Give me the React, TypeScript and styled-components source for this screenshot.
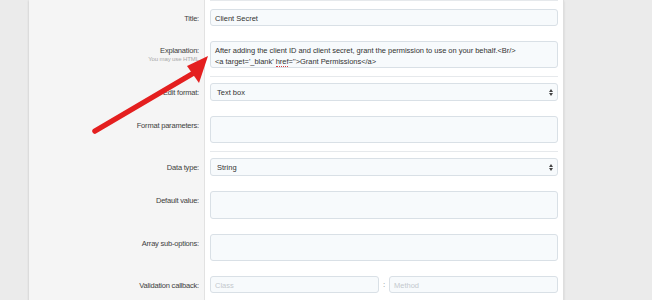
import * as React from "react";
import styled, { createGlobalStyle } from "styled-components";

const GlobalStyle = createGlobalStyle`
  html, body {
    margin: 0;
    padding: 0;
    height: 300px;
    overflow: hidden;
    background: #ebebeb;
    font-family: "Liberation Sans", Arial, sans-serif;
  }
`;

/* =========================
 * Styled components
 * ========================= */

const Stage = styled.div`
  position: relative;
  width: 652px;
  height: 300px;
  overflow: hidden;
`;

const Panel = styled.div`
  margin-left: 29px;
  width: 535px;
  background: #ffffff;
  border-right: 1px solid #dedede;
  border-bottom: 1px solid #d6d6d6;
  box-shadow: 0 1px 2px rgba(0, 0, 0, 0.12), -1px 0 2px rgba(0, 0, 0, 0.04);
  box-sizing: border-box;
`;

const Row = styled.div`
  display: grid;
  grid-template-columns: 176px 1fr;
`;

const LabelCell = styled.div<{ $pt: number }>`
  background: #f5f5f5;
  border-right: 1px solid #e2e2e2;
  padding: ${({ $pt }) => $pt}px 5px 0 0;
  text-align: right;
  display: flex;
  flex-direction: column;
  align-items: flex-end;
`;

const LabelText = styled.div`
  font-size: 7.5px;
  line-height: 11px;
  letter-spacing: -0.2px;
  color: #404040;
`;

const LabelHint = styled.div`
  font-size: 6px;
  line-height: 7px;
  letter-spacing: -0.1px;
  color: #a8a8a8;
`;

const FieldCell = styled.div<{ $pt: number }>`
  padding: ${({ $pt }) => $pt}px 5px 8px 5px;
`;

const DividerCell = styled.div`
  padding: 0 5px;
`;

const DividerLine = styled.div`
  height: 1px;
  background: #e6e9ec;
`;

const DividerRow = styled(Row)<{ $overlap?: boolean }>`
  margin-bottom: ${({ $overlap }) => ($overlap ? "-1px" : "0")};
`;

const TextInput = styled.div<{ $h: number; $placeholder?: boolean }>`
  height: ${({ $h }) => $h}px;
  box-sizing: border-box;
  border: 1px solid #d9e0e6;
  border-radius: 3px;
  background: #f7fafc;
  padding: 1px 4px 0;
  display: flex;
  align-items: center;
  font-size: 7.5px;
  color: ${({ $placeholder }) => ($placeholder ? "#c4c9ce" : "#333")};
  white-space: nowrap;
  overflow: hidden;
`;

const TextArea = styled.div<{ $h: number }>`
  height: ${({ $h }) => $h}px;
  box-sizing: border-box;
  border: 1px solid #d9e0e6;
  border-radius: 3px;
  background: #f7fafc;
  padding: 3px 4px 0;
  font-size: 7.5px;
  line-height: 11px;
  letter-spacing: -0.03px;
  color: #333;
  white-space: nowrap;
  overflow: hidden;
`;

const Spell = styled.span`
  border-bottom: 1px dotted #d84040;
  line-height: 8px;
  display: inline-block;
`;

const SelectBox = styled(TextInput)`
  justify-content: space-between;
  padding: 1px 4px 0 6px;
`;

const SplitRow = styled.div`
  display: grid;
  grid-template-columns: 1fr 10px 1fr;
  align-items: center;
`;

const SplitSep = styled.span`
  font-size: 8px;
  color: #888;
  text-align: center;
  line-height: 1;
`;

const ArrowOverlay = styled.svg`
  position: absolute;
  left: 0;
  top: 0;
  pointer-events: none;
`;

/* =========================
 * Componentes
 * ========================= */

const SelectArrows: React.FC = () => (
  <svg width="4" height="7" viewBox="0 0 4 7">
    <path d="M0 3 L2 0 L4 3 Z" fill="#444" />
    <path d="M0 4 L2 7 L4 4 Z" fill="#444" />
  </svg>
);

type FieldRowProps = {
  label: string;
  hint?: string;
  labelTop: number;
  top?: number;
  children: React.ReactNode;
};

const FieldRow: React.FC<FieldRowProps> = ({
  label,
  hint,
  labelTop,
  top = 7,
  children,
}) => (
  <Row>
    <LabelCell $pt={labelTop}>
      <LabelText>{label}</LabelText>
      {hint && <LabelHint>{hint}</LabelHint>}
    </LabelCell>
    <FieldCell $pt={top}>{children}</FieldCell>
  </Row>
);

const Divider: React.FC<{ overlap?: boolean }> = ({ overlap }) => (
  <DividerRow $overlap={overlap}>
    <LabelCell $pt={0} />
    <DividerCell>
      <DividerLine />
    </DividerCell>
  </DividerRow>
);

export default function App() {
  return (
    <Stage>
      <GlobalStyle />
      <Panel>
        <Divider />
        <FieldRow label="Title:" labelTop={12} top={8}>
          <TextInput $h={17}>Client Secret</TextInput>
        </FieldRow>
        <FieldRow label="Explanation:" hint="You may use HTML" labelTop={11}>
          <TextArea $h={27}>
            After adding the client ID and client secret, grant the permission
            to use on your behalf.&lt;Br/&gt;
            <br />
            &lt;a target='_blank' <Spell>href</Spell>=''&gt;Grant
            Permissions&lt;/a&gt;
          </TextArea>
        </FieldRow>
        <Divider overlap />
        <FieldRow label="Edit format:" labelTop={11}>
          <SelectBox $h={18}>
            <span>Text box</span>
            <SelectArrows />
          </SelectBox>
        </FieldRow>
        <FieldRow label="Format parameters:" labelTop={11}>
          <TextArea $h={27} />
        </FieldRow>
        <Divider overlap />
        <FieldRow label="Data type:" labelTop={11}>
          <SelectBox $h={18}>
            <span>String</span>
            <SelectArrows />
          </SelectBox>
        </FieldRow>
        <FieldRow label="Default value:" labelTop={11}>
          <TextArea $h={28} />
        </FieldRow>
        <FieldRow label="Array sub-options:" labelTop={11}>
          <TextArea $h={27} />
        </FieldRow>
        <FieldRow label="Validation callback:" labelTop={11}>
          <SplitRow>
            <TextInput $h={17} $placeholder>
              Class
            </TextInput>
            <SplitSep>:</SplitSep>
            <TextInput $h={17} $placeholder>
              Method
            </TextInput>
          </SplitRow>
        </FieldRow>
      </Panel>

      {/* seta vermelha por cima do formulário */}
      <ArrowOverlay width="652" height="300" viewBox="0 0 652 300">
        <line
          x1="95"
          y1="131"
          x2="192"
          y2="74"
          stroke="#e41f1f"
          strokeWidth="5.5"
          strokeLinecap="round"
        />
        <polygon points="208,56 187,66 199,83" fill="#e41f1f" />
      </ArrowOverlay>
    </Stage>
  );
}
